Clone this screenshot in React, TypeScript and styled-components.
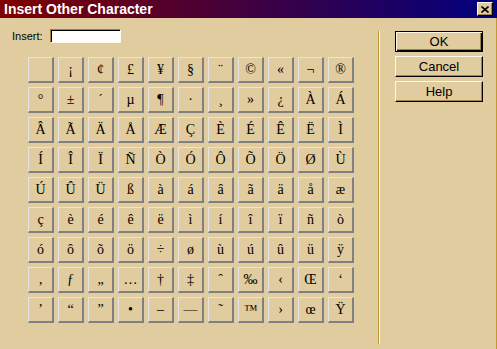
import React from 'react';
import styled, { createGlobalStyle } from 'styled-components';

const GlobalStyle = createGlobalStyle`
  html, body {
    margin: 0;
    padding: 0;
    background: #e0cc9e;
  }
`;

const CHARS: string[][] = [
  ['\u00a0', '¡', '¢', '£', '¥', '§', '¨', '©', '«', '¬', '®'],
  ['°', '±', '´', 'µ', '¶', '·', '¸', '»', '¿', 'À', 'Á'],
  ['Â', 'Ã', 'Ä', 'Å', 'Æ', 'Ç', 'È', 'É', 'Ê', 'Ë', 'Ì'],
  ['Í', 'Î', 'Ï', 'Ñ', 'Ò', 'Ó', 'Ô', 'Õ', 'Ö', 'Ø', 'Ù'],
  ['Ú', 'Û', 'Ü', 'ß', 'à', 'á', 'â', 'ã', 'ä', 'å', 'æ'],
  ['ç', 'è', 'é', 'ê', 'ë', 'ì', 'í', 'î', 'ï', 'ñ', 'ò'],
  ['ó', 'ô', 'õ', 'ö', '÷', 'ø', 'ù', 'ú', 'û', 'ü', 'ÿ'],
  ['‚', 'ƒ', '„', '…', '†', '‡', 'ˆ', '‰', '‹', 'Œ', '‘'],
  ['’', '“', '”', '•', '–', '—', '˜', '™', '›', 'œ', 'Ÿ'],
];

const Window = styled.div`
  width: 497px;
  height: 349px;
  display: flex;
  flex-direction: column;
  background: #e0cc9e;
  font-family: 'Liberation Sans', Arial, sans-serif;
  color: #000;
  overflow: hidden;
`;

const TitleBar = styled.div`
  height: 18px;
  flex: none;
  display: flex;
  align-items: center;
  justify-content: space-between;
  padding: 0 4px 0 4px;
  background: linear-gradient(to right, #800000, #000080);
`;

const Title = styled.span`
  color: #fff;
  font-weight: bold;
  font-size: 14px;
  line-height: 18px;
`;

const CloseButton = styled.div`
  width: 16px;
  height: 14px;
  box-sizing: border-box;
  display: flex;
  align-items: center;
  justify-content: center;
  background: #e0cc9e;
  border-top: 1px solid #fff8e8;
  border-left: 1px solid #fff8e8;
  border-right: 1px solid #000;
  border-bottom: 1px solid #000;
  box-shadow: inset -1px -1px 0 #a08448;
`;

const Body = styled.div`
  flex: 1;
  display: flex;
  border-right: 1px solid #c09a30;
`;

const LeftPane = styled.div`
  display: flex;
  flex-direction: column;
  padding: 11px 0 0 12px;
`;

const InsertRow = styled.div`
  display: flex;
  align-items: center;
  height: 14px;
  gap: 7px;
`;

const Label = styled.span`
  font-size: 11px;
`;

const TextBox = styled.div`
  width: 71px;
  height: 14px;
  box-sizing: border-box;
  background: #fff;
  border-top: 1px solid #a08030;
  border-left: 1px solid #a08030;
  border-right: 1px solid #fff8e8;
  border-bottom: 1px solid #fff8e8;
  box-shadow: inset 1px 1px 0 #000;
`;

const Grid = styled.div`
  margin: 14px 0 0 16px;
  display: grid;
  grid-template-columns: repeat(11, 26px);
  grid-auto-rows: 26px;
  gap: 4px;
`;

const Cell = styled.div`
  box-sizing: border-box;
  display: flex;
  align-items: center;
  justify-content: center;
  border-top: 1px solid #e4e4e4;
  border-left: 1px solid #e4e4e4;
  border-right: 2px solid #808080;
  border-bottom: 2px solid #808080;
  font-family: 'Liberation Serif', 'Times New Roman', serif;
  font-size: 14px;
  line-height: 1;
  padding-top: 1px;
`;

const Separator = styled.div`
  margin: 13px 0 0 24px;
  width: 1px;
  height: 313px;
  background: #c09a30;
  border-right: 1px solid #fff8e0;
`;

const RightPane = styled.div`
  margin: 13px 0 0 15px;
  display: flex;
  flex-direction: column;
  gap: 4px;
`;

const Button = styled.div<{ $default?: boolean }>`
  width: 88px;
  height: 21px;
  box-sizing: border-box;
  display: flex;
  align-items: center;
  justify-content: center;
  font-size: 13px;
  border-top: 1px solid ${p => (p.$default ? '#000' : '#fff8e8')};
  border-left: 1px solid ${p => (p.$default ? '#000' : '#fff8e8')};
  border-right: 1px solid #000;
  border-bottom: 1px solid #000;
  box-shadow: ${p =>
    p.$default
      ? 'inset 1px 1px 0 #fff8e8, inset -1px -1px 0 #000, inset -2px -2px 0 #a08448'
      : 'inset -1px -1px 0 #a08448'};
`;

export default function App() {
  return (
    <Window>
      <GlobalStyle />
      <TitleBar>
        <Title>Insert Other Character</Title>
        <CloseButton>
          <svg width="8" height="7" viewBox="0 0 8 7">
            <path d="M0.5 0.5 L7.5 6.5 M7.5 0.5 L0.5 6.5" stroke="#000" strokeWidth="1.6" />
          </svg>
        </CloseButton>
      </TitleBar>
      <Body>
        <LeftPane>
          <InsertRow>
            <Label>Insert:</Label>
            <TextBox />
          </InsertRow>
          <Grid>
            {CHARS.flat().map((c, i) => (
              <Cell key={i}>{c}</Cell>
            ))}
          </Grid>
        </LeftPane>
        <Separator />
        <RightPane>
          <Button $default>OK</Button>
          <Button>Cancel</Button>
          <Button>Help</Button>
        </RightPane>
      </Body>
    </Window>
  );
}
